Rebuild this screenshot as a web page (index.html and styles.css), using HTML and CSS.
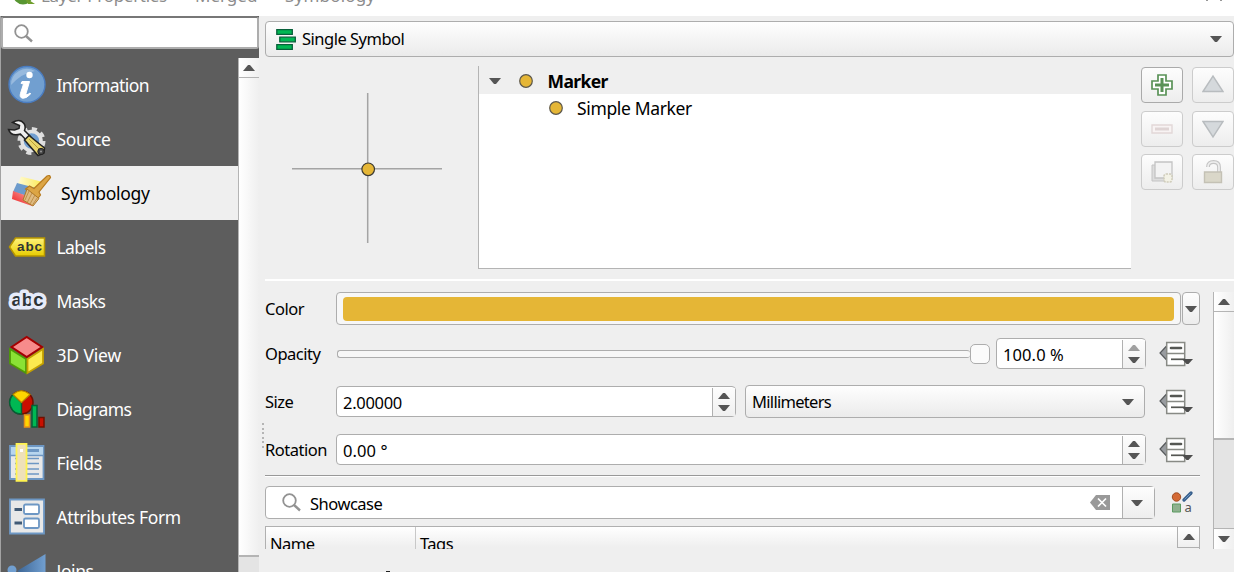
FILE: index.html
```html
<!DOCTYPE html>
<html lang="en">
<head>
<meta charset="utf-8">
<title>Layer Properties</title>
<link rel="stylesheet" href="styles.css">
</head>
<body>
<svg class="defs" width="0" height="0">
  <defs>
    <linearGradient id="gold" x1="0" y1="0" x2="0" y2="1"><stop offset="0" stop-color="#fff27a"/><stop offset="1" stop-color="#e8cc00"/></linearGradient>
    <linearGradient id="blue" x1="0" y1="0" x2="1" y2="0"><stop offset="0" stop-color="#3c6595"/><stop offset="1" stop-color="#719fd0"/></linearGradient>
    <linearGradient id="red" x1="1" y1="0" x2="0" y2="1"><stop offset="0" stop-color="#f7b0b0"/><stop offset="1" stop-color="#f01818"/></linearGradient>
    <linearGradient id="yel" x1="0" y1="0" x2="1" y2="0"><stop offset="0" stop-color="#fffbd8"/><stop offset="1" stop-color="#fce94f"/></linearGradient>
    <g id="mag"><circle cx="7.500" cy="7.500" r="6.300" fill="none" stroke="#929292" stroke-width="1.800"/><path d="M12 12l6 5.500" stroke="#929292" stroke-width="2.400"/></g>
    <path id="dn" d="M0 0h12l-5 6h-2z" fill="#555"/>
    <path id="up" d="M0 6h12l-5-6h-2z" fill="#555"/>
    <g id="dd">
      <path d="M8.500 5L1 13l7.500 8z" fill="#999ca0" stroke="#55585a" stroke-width="1.200"/>
      <path d="M7.700 2.500h18v23h-18zM7.700 13.500h18" fill="#fff" stroke="#888a85" stroke-width="1.500"/>
      <path d="M12 8h10" stroke="#555753" stroke-width="2.600" stroke-linecap="round"/>
      <path d="M12 19.300h14" stroke="#555753" stroke-width="1.700"/>
      <path d="M23 19h11l-4.500 5h-2z" fill="#4d4d4d"/>
    </g>
  </defs>
</svg>
<div class="window">
  <header class="titlebar">
    <svg class="logo" width="24" height="16"><circle cx="11" cy="-5.500" r="7.500" fill="none" stroke="#589632" stroke-width="5"/><path d="M12-3l11 7h-7z" fill="#6f9e2c"/></svg>
    <span class="t1">Layer Properties</span><span class="t2">—</span><span class="t3">Merged</span><span class="t4">—</span><span class="t5">Symbology</span>
    <svg class="close" width="20" height="3"><path d="M2 0v1M16 0v1" stroke="#777" stroke-width="1.500"/></svg>
  </header>
  <div class="main">
    <aside class="side">
      <div class="find"><svg width="20" height="19"><use href="#mag"/></svg></div>
      <div class="sidebody">
        <nav class="nav">
          <div class="item"><svg width="40" height="40" viewBox="0 0 40 40"><circle cx="20" cy="19.500" r="18" fill="#719fd0" stroke="#4a7cc0" stroke-width="1.400"/><path d="M4 20A16 16 0 0 1 28 6Q15 8 4 20z" fill="#b8d0ea" opacity=".55"/><circle cx="22.500" cy="10" r="3.200" fill="#fff"/><path d="M15 16.500h7.500l-3.500 12q0 2.500 4-.5l.7.800q-4.500 5-8 4.500-3.500-.7-2.200-5l3-9.200-2.500-.8z" fill="#fff" stroke="#fff"/></svg><span class="n1">Information</span></div>
          <div class="item"><svg width="40" height="40" viewBox="0 0 40 40"><circle cx="24.500" cy="22" r="12" fill="none" stroke="#ddd" stroke-width="4" stroke-dasharray="5 4.420"/><circle cx="24.500" cy="22" r="9.500" fill="#719fd0" stroke="#e2e2e2" stroke-width="3.500"/><path d="M1.500 10.500l6 .5 4.500-1.500.5-3L5.500 3.500Q13-1 17 4.500q2 3 .5 7l6 6-4 4-6-6.500Q4 18 1.500 10.500z" fill="#eee" stroke="#222" stroke-width="1.500"/><path d="M17.500 21l4.500-4.500L37.500 29l-.5 5-6 2.500z" fill="#e9d66c" stroke="#222" stroke-width="1.500"/><path d="M22 20l10 10" stroke="#b9a136"/><circle cx="34" cy="32.500" r="3.200" fill="#444" stroke="#222"/><circle cx="34" cy="32.500" r="1" fill="#999"/></svg><span class="n2">Source</span></div>
          <div class="item selected"><svg width="44" height="40" viewBox="0 0 44 40"><path d="M11 3.500L33 9l-5 9-21-5z" fill="url(#yel)"/><path d="M7 10l19 5-5 9-18-5z" fill="#6d9bcc"/><path d="M3 18l20 7-1 8-20-7z" fill="url(#red)"/><path d="M24 15.500L37 3q3-1.500 3.500 1.500L29 19l1.500 3-3 4-12-10 4-3z" fill="#dca544" stroke="#b77a1e" stroke-width="1.200"/><path d="M17 16l12 9.500-6 7.500-10-6z" fill="#dfbb82" stroke="#ad7725"/><path d="M19 18l-4 9M22 20l-4.500 9M25 22l-5 9M27.500 24.500L22.500 32" stroke="#b78439" stroke-width=".8"/></svg><span class="n3">Symbology</span></div>
          <div class="item"><svg width="40" height="40" viewBox="0 0 40 40"><path d="M2.500 20l6-9h29v18h-29z" fill="url(#gold)" stroke="#b89600" stroke-width="1.500"/><text class="abc" x="10" y="24" font-size="13.500" textLength="25">abc</text></svg><span class="n4">Labels</span></div>
          <div class="item"><svg class="wide" width="42" height="40" viewBox="0 0 42 40"><text class="abc halo" x="4.500" y="24.500" font-size="18.500" textLength="32">abc</text></svg><span class="n5">Masks</span></div>
          <div class="item"><svg width="40" height="40" viewBox="0 0 40 40"><path d="M3 14L19 24v14L3 28.500z" fill="#8ae234" stroke="#4e9a06" stroke-width="1.800"/><path d="M36 14L20.500 24v14L36 28.500z" fill="#fce94f" stroke="#c4a000" stroke-width="1.800"/><path d="M4.500 12L19.700 2 35 12 19.700 22z" fill="#f78b8b" stroke="#a40000" stroke-width="2"/></svg><span class="n6">3D View</span></div>
          <div class="item"><svg width="40" height="40" viewBox="0 0 40 40"><circle cx="14.500" cy="13.500" r="11.500" fill="#c80f00" stroke="#701000" stroke-width="1.500"/><path d="M14.500 13.500V25A11.500 11.500 0 0 1 6 5.500z" fill="#00b853" stroke="#065f36" stroke-width="1.500"/><path d="M14.500 13.500L6 5.500Q14-2 23 5.500z" fill="#ffd500" stroke="#b58c00" stroke-width="1.200"/><path d="M17.500 26h5v12h-5z" fill="#ffd500" stroke="#e79219" stroke-width="1.500"/><path d="M25 16.500h5V38h-5z" fill="#00b853" stroke="#065f36" stroke-width="1.500"/><path d="M32 28.500h5V38h-5z" fill="#c80f00" stroke="#701000" stroke-width="1.500"/></svg><span class="n7">Diagrams</span></div>
          <div class="item"><svg width="40" height="40" viewBox="0 0 40 40"><path d="M3 3h33.500v33H3z" fill="#e8e8e8" stroke="#6d97c4" stroke-width="1.800"/><path d="M4 4h32v8H4z" fill="#b7d5ee"/><path d="M3 12.500h33" stroke="#6d97c4" stroke-width="1.500"/><path d="M9 7.500h23" stroke="#6d97c4" stroke-width="3"/><path d="M8 15.500h24M8 20.500h24M8 26h24M8 31h24" stroke="#6d97c4" stroke-width="1.700"/><path d="M9.500.8h10v37h-10z" fill="#efe1b8" stroke="#fff34f" stroke-width="1.800"/><path d="M13 6h3v3h-3z" fill="#fff"/></svg><span class="n8">Fields</span></div>
          <div class="item"><svg width="40" height="40" viewBox="0 0 40 40"><path d="M3 2.500H37v34H3z" fill="#e8e8e8" stroke="#6d97c4" stroke-width="1.800"/><path d="M7.500 12.500H15M7.500 26H15" stroke="#415a75" stroke-width="3.200"/><rect x="17" y="7.500" width="15" height="9.500" rx="1.500" fill="#fff" stroke="#6d97c4" stroke-width="1.800"/><rect x="17" y="21.500" width="15" height="9.500" rx="1.500" fill="#fff" stroke="#6d97c4" stroke-width="1.800"/></svg><span class="n9">Attributes Form</span></div>
          <div class="item"><svg width="40" height="40" viewBox="0 0 40 40"><path d="M10 20L38.500 3v34z" fill="url(#blue)"/><circle cx="5" cy="19" r="4.500" fill="#719fd0"/></svg><span class="n10">Joins</span></div>
        </nav>
        <div class="vscroll sidescroll"><div class="sbtn"><svg width="12" height="6"><use href="#up"/></svg></div><div class="handle"></div><div class="groove"></div></div>
      </div>
    </aside>
    <section class="content">
      <div class="combo renderer"><svg width="21" height="23"><g fill="#00b853" stroke="#08603a" stroke-width="1.300"><path d="M.8 1.700h15.500v4.600H.8zM3.800 9.200h15.500v4.600H3.800zM.8 16.700h15.500v4.600H.8z"/></g></svg><span class="c1">Single Symbol</span><svg class="arrow" width="12" height="6"><use href="#dn"/></svg></div>
      <div class="symbol">
        <svg class="preview" width="213" height="203"><path d="M27 102.700h150M102.700 27v150" stroke="#a4a4a4" stroke-width="1.500"/><circle cx="103.200" cy="103.300" r="6.300" fill="#e5b636" stroke="#3c3a33" stroke-width="1.200"/></svg>
        <div class="tree">
          <div class="row root"><svg width="12" height="6"><use href="#dn"/></svg><svg class="dot" width="16" height="16"><circle cx="8" cy="8" r="6.300" fill="#e5b636" stroke="#5c574b" stroke-width="1.200"/></svg><b class="m1">Marker</b></div>
          <div class="row leaf"><svg width="16" height="16"><circle cx="8" cy="8" r="6.300" fill="#e5b636" stroke="#5c574b" stroke-width="1.200"/></svg><span class="m2">Simple Marker</span></div>
        </div>
        <div class="tools">
          <div class="btn on"><svg width="22" height="22"><path d="M7 1h8v6h6v8h-6v6H7v-6H1V7h6z" fill="#fff" stroke="#5a9257" stroke-width="1.700"/><path d="M11 4v14M4 11h14" stroke="#5a9257" stroke-width="3"/></svg></div>
          <div class="btn"><svg width="22" height="22"><path d="M1 17.500L11 2l10 15.500z" fill="#d5d9dc" stroke="#b8bcbf" stroke-width="1.400"/></svg></div>
          <div class="btn"><svg width="22" height="22"><path d="M1 7h20v8H1z" fill="#f8f3f3" stroke="#e2d8d8" stroke-width="1.400"/><path d="M4 11h14" stroke="#dfd4d4" stroke-width="3"/></svg></div>
          <div class="btn"><svg width="22" height="22"><path d="M1 3.500L11 19 21 3.500z" fill="#d5d9dc" stroke="#b8bcbf" stroke-width="1.400"/></svg></div>
          <div class="btn"><svg width="22" height="22"><path d="M1 4h14v16H1z" fill="#ddd" stroke="#c4c4c4"/><path d="M4 1h17v16H4z" fill="#f3f3f3" stroke="#c4c4c4" stroke-width="1.300"/><rect x="13" y="13" width="8" height="8" rx="2" fill="#f3f2e6" stroke="#cfccbb" stroke-dasharray="2 1" stroke-width="1.600"/></svg></div>
          <div class="btn"><svg width="22" height="24"><path d="M6 7q0-5 5.500-5T17 7v5" fill="none" stroke="#c4c4c4" stroke-width="3.800"/><path d="M6 7q0-5 5.500-5T17 7v5" fill="none" stroke="#eee" stroke-width="1.700"/><path d="M2.500 12h17v10.500h-17z" fill="#dad7c9" stroke="#c4c1b5" stroke-width="1.400"/></svg></div>
        </div>
      </div>
      <div class="rule"></div>
      <div class="lower">
        <div class="grip"></div>
        <div class="form">
          <div class="frow r1"><label class="f1">Color</label><div class="colorbtn"><i></i></div><div class="btn mini"><svg width="12" height="6"><use href="#dn"/></svg></div></div>
          <div class="frow r2"><label class="f2">Opacity</label><div class="slider"><i class="bar"></i><i class="knob"></i></div><div class="spin s1"><span class="v1">100.0 %</span><div class="steps"><svg class="dim" width="12" height="6"><use href="#up"/></svg><svg width="12" height="6"><use href="#dn"/></svg></div></div><svg class="ovr" width="36" height="28"><use href="#dd"/></svg></div>
          <div class="frow r3"><label class="f3">Size</label><div class="spin s2"><span class="v2">2.00000</span><div class="steps"><svg width="12" height="6"><use href="#up"/></svg><svg width="12" height="6"><use href="#dn"/></svg></div></div><div class="combo unit"><span class="v3">Millimeters</span><svg class="arrow" width="12" height="6"><use href="#dn"/></svg></div><svg class="ovr" width="36" height="28"><use href="#dd"/></svg></div>
          <div class="frow r4"><label class="f4">Rotation</label><div class="spin s3"><span class="v4">0.00 °</span><div class="steps"><svg width="12" height="6"><use href="#up"/></svg><svg width="12" height="6"><use href="#dn"/></svg></div></div><svg class="ovr" width="36" height="28"><use href="#dd"/></svg></div>
          <div class="hr"></div>
          <div class="frow r5"><div class="filter"><svg width="20" height="19"><use href="#mag"/></svg><span class="v5">Showcase</span><svg class="clear" width="20" height="16"><path d="M6 0h14v15H6L0 7.500z" fill="#999"/><path d="M8 3.500l8 8M16 3.500l-8 8" stroke="#fff" stroke-width="1.700"/></svg><div class="drop"><svg width="12" height="6"><use href="#dn"/></svg></div></div>
          <svg class="style" width="24" height="24"><circle cx="5.500" cy="6" r="4.200" fill="#d46a35" stroke="#a04c22"/><path d="M13 9l7-7" stroke="#375f8c" stroke-width="3.200" stroke-linecap="round"/><path d="M13.500 8.500l6-6" stroke="#6d97c4" stroke-width="1"/><path d="M1.500 13h8v8h-8z" fill="#8fb18f" stroke="#5a9a60"/><text x="13.500" y="21" class="glyph">a</text></svg></div>
          <div class="table"><div class="th th1"><span class="h1">Name</span></div><div class="th th2"><span class="h2">Tags</span></div><div class="tbtn"><svg width="12" height="6"><use href="#up"/></svg></div></div>
        </div>
        <div class="vscroll formscroll"><div class="sbtn"><svg width="12" height="6"><use href="#up"/></svg></div><div class="handle"></div><div class="groove"></div><div class="sbtn end"><svg width="12" height="6"><use href="#dn"/></svg></div></div>
      </div>
      <div class="peek"></div>
    </section>
  </div>
</div>
</body>
</html>
```

FILE: styles.css
```css
* { box-sizing: border-box; }
body { margin: 0; font: 16.5px/20px "Noto Sans", "Open Sans", sans-serif; color: #000; }
svg { display: block; flex: none; }
.defs { position: absolute; }
.window { width: 1234px; height: 572px; overflow: hidden; background: #efefef; display: flex; flex-direction: column; }
span, label, b { white-space: nowrap; }

.titlebar { height: 16px; flex: none; background: #fff; display: flex; overflow: hidden; color: #8c8c8c; font-size: 17px; line-height: 20px; padding-left: 12px; }
.titlebar span { margin-top: -14px; flex: none; }
.logo { margin-right: 5px; }
.t1 { width: 126px; letter-spacing: -.3px; }
.t2, .t4 { width: 28px; padding-left: 5px; opacity: 0; }
.t3 { width: 62px; }
.t5 { letter-spacing: .2px; }
.close { margin-left: auto; margin-right: 9px; }

.main { display: flex; flex: 1; min-height: 0; }
.side { width: 259px; flex: none; display: flex; flex-direction: column; background: #5d5d5d; border-left: 1px solid #a3a3a3; min-height: 0; }
.find { height: 33px; flex: none; background: #fff; border: 2px solid #adadad; border-top-color: #777; border-radius: 3px; margin-bottom: 9px; padding: 6px 0 0 11px; }
.sidebody { display: flex; flex: 1; min-height: 0; }
.nav { flex: 1; min-width: 0; overflow: hidden; font-size: 17.5px; line-height: 24px; color: #fff; }
.item { height: 54px; display: flex; align-items: center; padding-left: 6px; }
.item svg { width: 40px; margin-right: 9.5px; }
.item svg.wide { width: 42px; margin-right: 7.5px; }
.item.selected { background: #efefef; color: #000; padding-left: 9px; }
.item.selected svg { width: 44px; margin-right: 7px; }
.n1 { letter-spacing: -.6px; }
.n2 { letter-spacing: -.35px; }
.n3 { letter-spacing: -.25px; }
.n4, .n5 { letter-spacing: -.6px; }
.n6 { letter-spacing: -.15px; }
.n7 { letter-spacing: -.55px; }
.n8 { letter-spacing: -.3px; }
.n9 { letter-spacing: -.35px; }
.n10 { letter-spacing: -.4px; }
.abc { font-family: "Liberation Sans", sans-serif; font-weight: bold; fill: #2e3436; }
.halo { stroke: #e6ebfa; stroke-width: 7px; stroke-linejoin: round; paint-order: stroke; }

.vscroll { display: flex; flex-direction: column; flex: none; background: #fafafa; border-left: 1px solid #b4b4b4; }
.sbtn { height: 20px; flex: none; display: flex; align-items: center; justify-content: center; border-bottom: 1px solid #b4b4b4; background: linear-gradient(90deg, #fff, #f0f0f0); }
.handle { background: linear-gradient(90deg, #fff, #efefef); border-bottom: 2px solid #b4b4b4; }
.groove { background: #e4e4e4; flex: 1; }
.sidescroll { width: 21px; }
.sidescroll .handle { height: 479px; }

.content { flex: 1; min-width: 0; padding: 5px 0 0 6px; display: flex; flex-direction: column; }
.combo { display: flex; align-items: center; border: 1.5px solid #adadad; border-radius: 4px; background: linear-gradient(#fefefe, #ebebeb); }
.arrow { margin-left: auto; }
.renderer { height: 36px; width: 969px; flex: none; padding: 0 11px 0 10px; }
.renderer span { margin-left: 5px; }
.symbol { display: flex; height: 203px; margin-top: 9px; flex: none; }
.preview { flex: none; }
.tree { width: 653px; background: #fff; border: solid #b4b4b4; border-width: 0 0 1px 1px; }
.row { height: 28px; display: flex; align-items: center; font-size: 17.5px; }
.m1 { letter-spacing: -.6px; }
.m2 { letter-spacing: -.35px; }
.root { background: #efefef; padding: 2px 0 0 10px; }
.root .dot { margin: 0 13.500px 0 17px; }
.leaf { padding-left: 69px; }
.leaf span { margin-left: 13px; }
.tools { display: grid; grid-template-columns: 42px 42px; grid-auto-rows: 36px; gap: 7.5px 9px; margin: 1px 0 0 10px; }
.btn { border: 1.5px solid #ccc; border-radius: 4px; background: linear-gradient(#fdfdfd, #ededed); display: flex; align-items: center; justify-content: center; }
.btn.on { border-color: #aaa; }
.rule { height: 2px; background: #fff; margin-top: 10px; flex: none; }

.lower { display: flex; height: 269px; flex: none; padding-top: 11px; margin-left: -3px; }
.grip { width: 2px; height: 25px; margin: 131px 1px 0 0; background: repeating-linear-gradient(#b5b5b5 0 2px, transparent 2px 4.5px); }
.form { width: 935px; margin-right: 13px; overflow: hidden; height: 257px; }
.frow { display: flex; align-items: center; }
.frow, .renderer, .table { letter-spacing: -.5px; }
.frow label { width: 71px; flex: none; }
.r1 { height: 33px; }
.colorbtn { width: 845px; height: 33px; border: 1.5px solid #adadad; border-radius: 4px; background: #f7f7f7; padding: 4px 6px 3px 6px; }
.colorbtn i { display: block; height: 24px; border-radius: 4px; background: #e5b636; }
.mini { width: 18px; height: 33px; border-color: #adadad; margin-left: 1px; }
.r2 { height: 31px; margin-top: 13px; }
.slider { width: 654px; display: flex; align-items: center; margin-right: 6px; padding-left: 1px; }
.bar { flex: 1; height: 8px; border: 1.5px solid #adadad; border-radius: 3px; background: #f7f7f7; border-right: 0; }
.knob { width: 20px; height: 20px; border: 1.5px solid #adadad; border-radius: 5px; background: #fbfbfb; }
.spin { height: 31px; border: 1.5px solid #adadad; border-radius: 4px; background: #fff; display: flex; align-items: center; justify-content: space-between; padding-left: 6px; }
.spin span { padding-top: 2px; letter-spacing: -.3px; }
.spin .v1, .spin .v4 { letter-spacing: .1px; }
.s1 { width: 150px; }
.s2 { width: 400px; }
.s3 { width: 810px; }
.steps { width: 23px; height: 28px; border-left: 1px solid #b0b0b0; background: linear-gradient(#fdfdfd, #f0f0f0); display: flex; flex-direction: column; align-items: center; justify-content: center; gap: 6px; flex: none; }
.dim { opacity: .55; }
.ovr { margin-left: 13px; }
.r3 { height: 33px; margin-top: 16px; }
.r3 .ovr { margin-left: 14px; }
.unit { width: 400px; height: 33px; margin-left: 9px; padding: 0 10px 0 6px; }
.v3 { letter-spacing: -.7px; }
.r4 { height: 31px; margin-top: 16px; }
.hr { height: 2px; background: #999; border-bottom: 1px solid #fff; margin-top: 10px; }
.r5 { height: 33px; margin-top: 9px; }
.filter { width: 890px; height: 33px; border: 1.5px solid #adadad; border-radius: 4px; background: #fff; display: flex; align-items: center; padding-left: 16px; }
.v5 { margin-left: 8px; padding-top: 2px; }
.clear { margin: 0 12px 0 auto; }
.drop { width: 32px; height: 31px; border-left: 1px solid #b0b0b0; background: linear-gradient(#fdfdfd, #eee); display: flex; align-items: center; justify-content: center; padding-right: 3px; }
.style { margin-left: 16px; }
.glyph { font: 13px "Noto Sans", sans-serif; fill: #555; }
.table { height: 32px; margin-top: 7px; border: 1px solid #b0b0b0; border-width: 1px 1px 0; display: flex; background: linear-gradient(#fff, #efefef 20px); }
.th { padding: 7px 0 0 4px; }
.th1 { width: 150px; border-right: 1px solid #c8c8c8; }
.th2 { flex: 1; }
.tbtn { width: 22px; height: 21px; border-left: 1px solid #b0b0b0; border-bottom: 1px solid #b0b0b0; display: flex; align-items: center; justify-content: center; }
.formscroll { width: 21px; height: 257px; }
.formscroll .handle { height: 128px; }
.formscroll .groove { height: 88px; flex: none; }
.formscroll .end { border: 0; border-top: 1px solid #b4b4b4; height: 21px; }
.peek { width: 4px; height: 1px; background: #222; margin: 21px 0 0 121px; flex: none; }
```
